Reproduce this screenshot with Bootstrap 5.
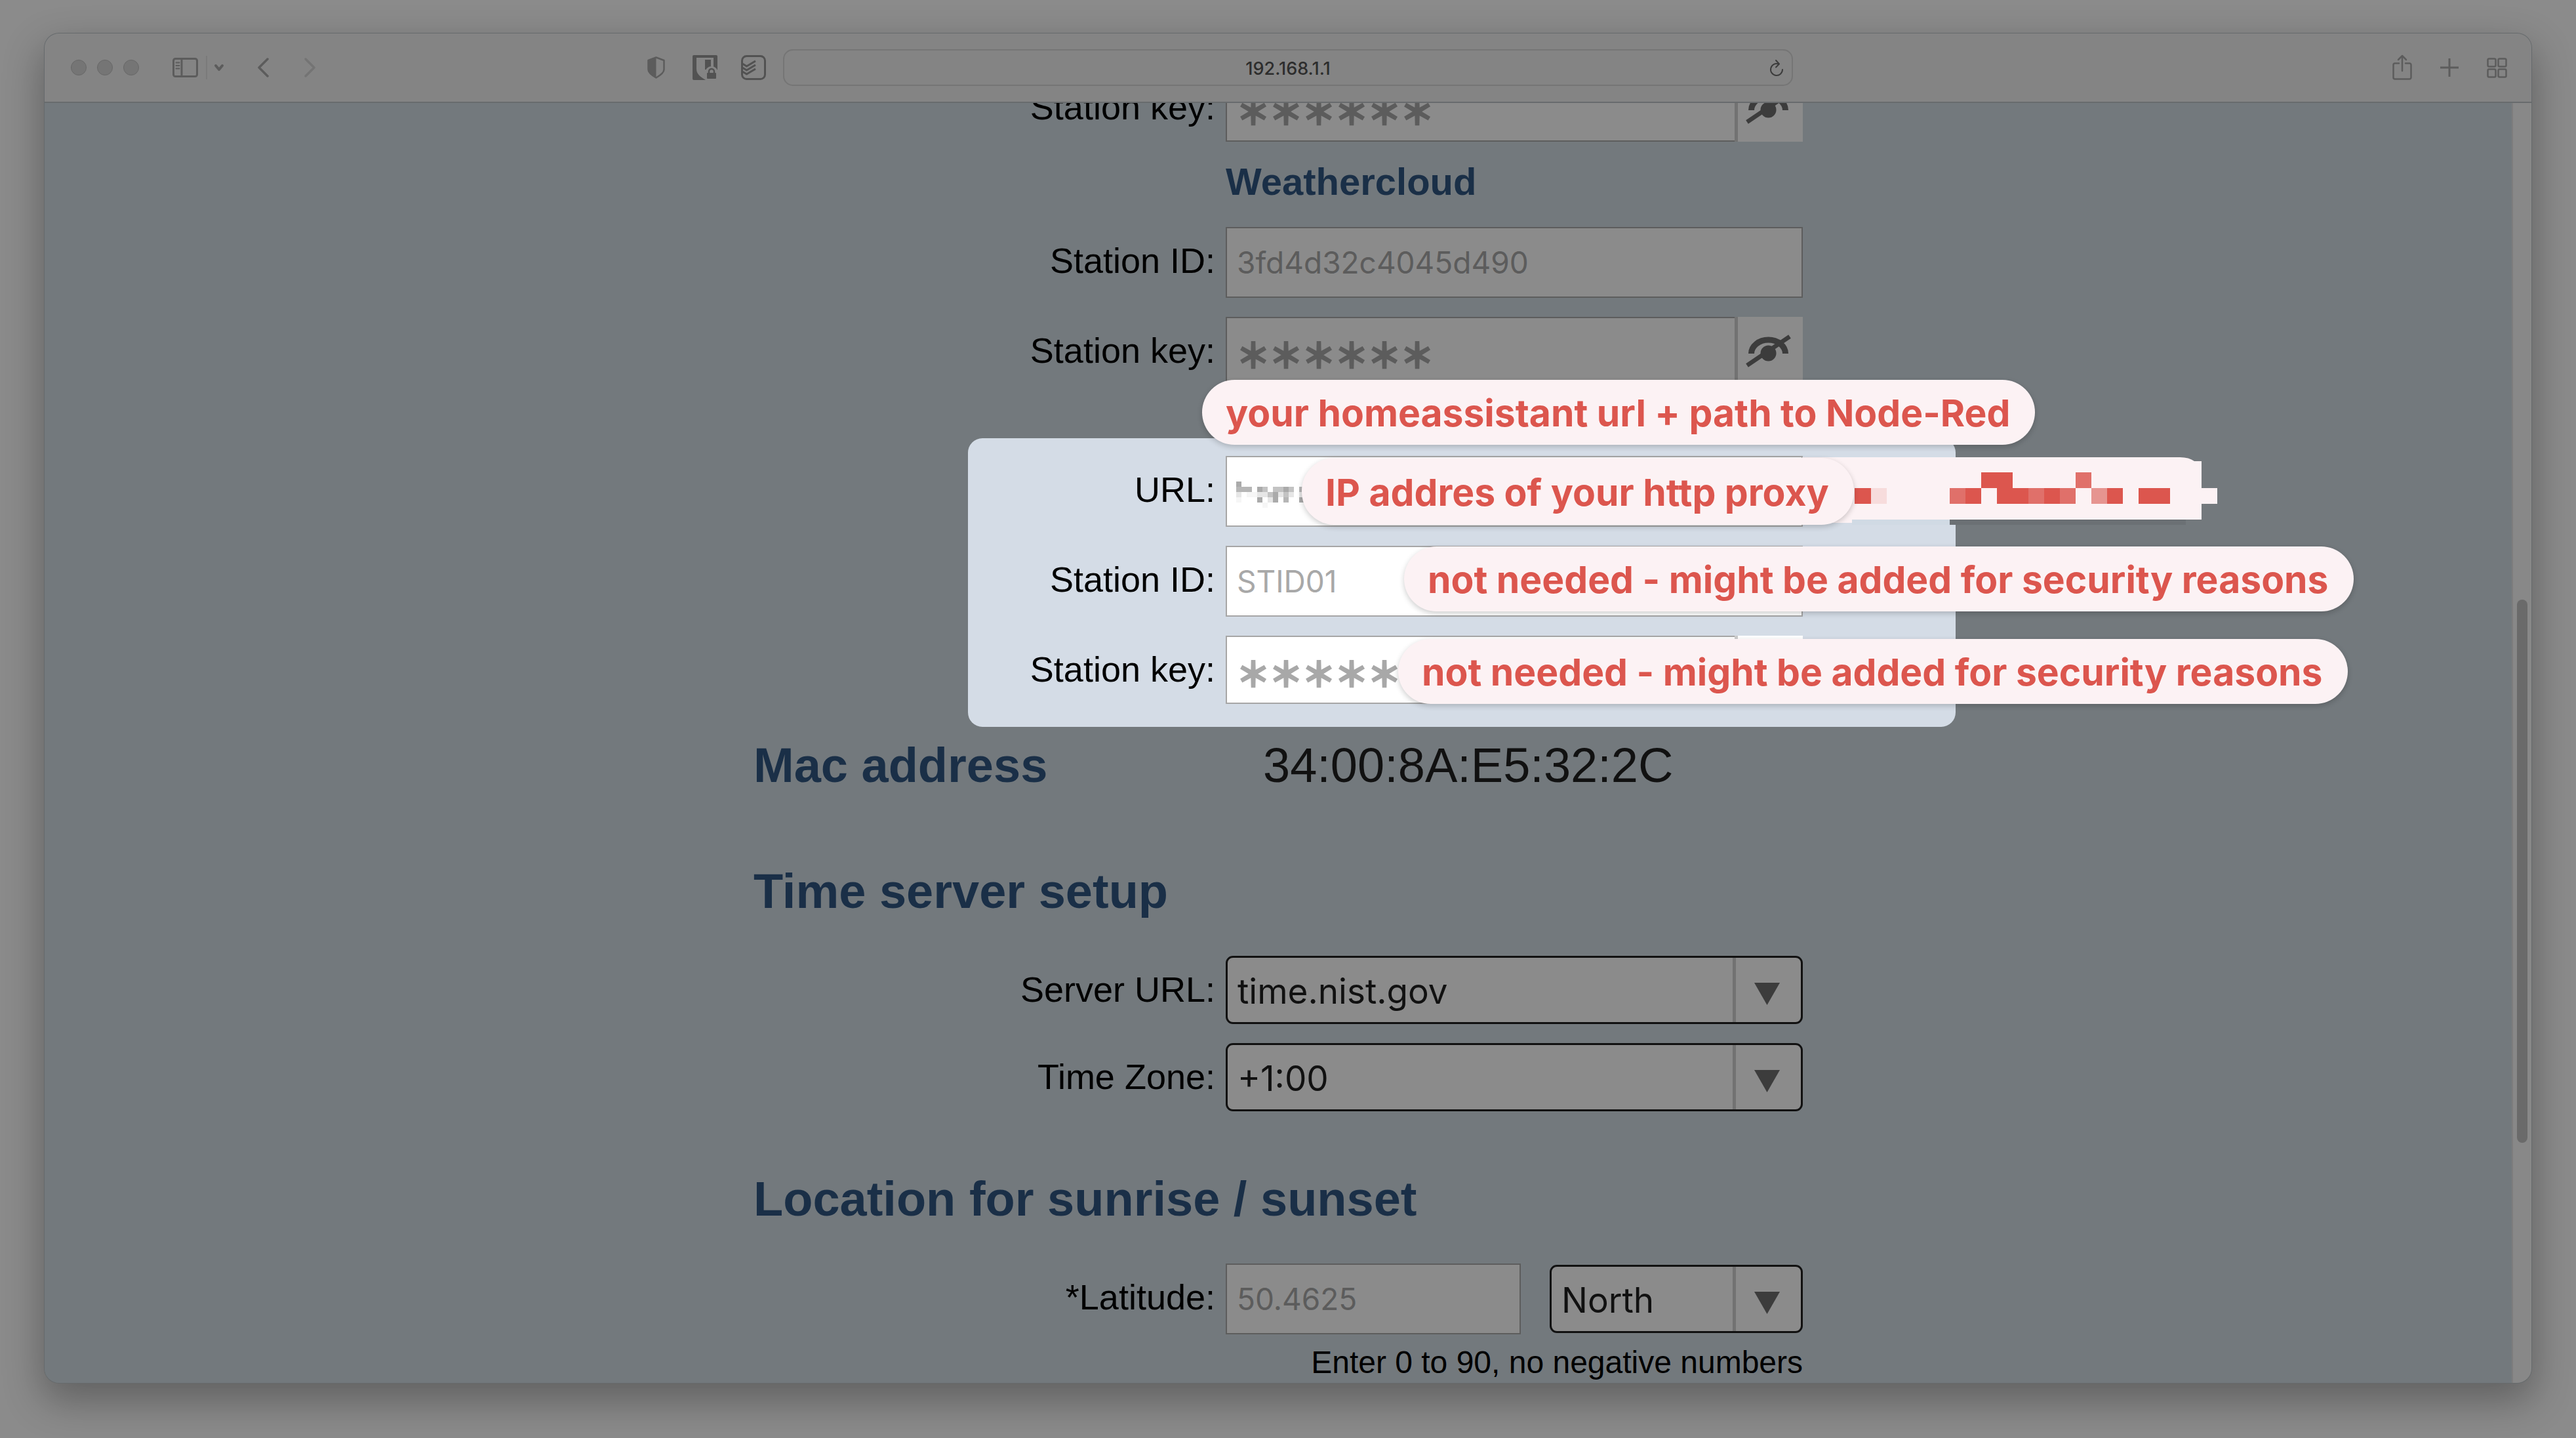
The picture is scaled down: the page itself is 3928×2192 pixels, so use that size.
<!DOCTYPE html>
<html lang="en">
<head>
<meta charset="utf-8">
<meta name="viewport" content="width=device-width, initial-scale=1">
<title>192.168.1.1</title>
<link href="https://cdn.jsdelivr.net/npm/bootstrap@5.3.0/dist/css/bootstrap.min.css" rel="stylesheet">
<style>
  body { background: #8b8b8b; padding: 51px 68px 84px; font-family: "Liberation Sans", Arial, sans-serif; color: #000; }
  .app-window { border-radius: 22px; background: #73797d; box-shadow: 0 0 0 1px #666a6c, 0 24px 60px 4px rgba(0,0,0,.3); }

  /* toolbar */
  .toolbar { height: 106px; background: #848484; border-bottom: 2px solid #686b6d; color: #5c5c5c; }
  .toolbar .btn { color: inherit; line-height: 1; }
  .toolbar svg { display: block; }
  .traffic { width: 24px; height: 24px; background: #757575; border: 1px solid #686868; }
  .side { flex: 1 1 0; }
  .group-start { padding-left: 40px; padding-right: 26px; }
  .group-end { padding-left: 29px; padding-right: 37px; gap: 43px; }
  .address { width: 1540px; height: 56px; border: 2px solid #757575; border-radius: 15px; }
  .address input { background: none; border: 0; width: 100%; height: 52px; text-align: center; color: #2d2d2d; font: 500 27px/48px Inter, sans-serif; padding: 3px 0 0; }
  .address .btn { right: 11px; top: 12px; color: #3c3c3c; }

  /* page */
  .page { min-height: 0; }
  .page-scroll { background: #73797d; }
  .setup { width: 1600px; max-width: 100%; margin-top: -45px; }
  .field-row { gap: 16px; margin-bottom: 29px; }
  .field-row label { flex: 1 1 0; text-align: right; font-size: 54px; line-height: 102px; white-space: nowrap; }
  .field { width: 880px; flex: none; }
  .entry { height: 108px; border: 2px solid #5d5d5d; border-radius: 0; background: #8b8b8b; padding: 0 15px; font: 46px/100px Inter, sans-serif; color: #5c5c5c; }
  .entry::placeholder, .entry:focus::placeholder { color: #5c5c5c; opacity: 1; }
  .entry:focus { background: #8b8b8b; box-shadow: none; }
  .entry-secret { height: 104px; font-family: "Noto Sans CJK SC", sans-serif; font-size: 50px; border-right: 0; padding-top: 6px; -webkit-text-stroke: 4px #5c5c5c; }
  .reveal { width: 104px; height: 104px; flex: none; border: 0; border-left: 5px solid #727272; border-radius: 0; background: #8b8b8b; padding: 0; color: #3c3c3c; }
  .reveal svg { display: block; }
  .pick { border: 3px solid #111; border-radius: 11px; height: 104px; background-color: #8b8b8b; color: #111; font: 53px/90px Inter, sans-serif; padding: 4px 110px 0 15px;
    background-image: url("data:image/svg+xml,%3Csvg xmlns='http://www.w3.org/2000/svg' viewBox='0 0 104 98'%3E%3Cpath d='M0 0h5v98H0z' fill='%23727272'/%3E%3Cpath d='M33 38h39L52.500 72z' fill='%233c3c3c'/%3E%3C/svg%3E");
    background-size: 104px 98px; background-position: right 0 top 0; }
  .entry-short { width: 450px; }
  .pick-short { width: 386px; }

  .provider { font-size: 58px; line-height: 122px; font-weight: 700; color: #1a2f47; margin: 0 0 8px 720px; }
  .section-title { font-size: 74px; line-height: 84px; font-weight: 700; color: #1a2f47; margin: 0 0 56px; }
  .time-title { margin-top: 108px; }
  .place-title { margin-top: 92px; }
  .mac-row { margin-top: 17px; }
  .mac-title { width: 777px; margin: 0; }
  .mac-value { font-size: 74px; line-height: 84px; color: #111; }
  .hint { font-size: 48px; line-height: 56px; margin: -14px 0 0; }

  /* highlighted group */
  .spot { margin: 81px -233px 0 327px; padding: 27px 233px 35px 0; background: #d4dce6; border-radius: 22px; }
  .spot .entry { background: #fff; border-color: #a6a6a6; color: #a8a8a8; }
  .spot .entry-secret { -webkit-text-stroke-color: #a8a8a8; }
  .spot .entry::placeholder { color: #a8a8a8; }
  .spot .reveal { background: #fff; border-color: #ccc; }
  .note { position: absolute; height: 99px; line-height: 101px; padding: 0 38px 0 36px; border-radius: 50px; background: #fcf2f4; color: #dc564e; font-family: Inter, sans-serif; font-size: 57px; font-weight: 700; white-space: nowrap; box-shadow: 0 3px 8px rgba(0,0,0,.2); }
  .note-path { left: 357px; top: -89px; }
  .note-proxy { left: 509px; top: 30px; height: 102px; line-height: 106px; }
  .note-id { left: 665px; top: 165px; }
  .note-key { left: 656px; top: 306px; }
  .masked-note { position: absolute; left: 1272px; top: 29px; }
  .masked-url { position: absolute; left: 409px; top: 66px; }

  .track { width: 30px; border-left: 2px solid #7d7d7d; background: #888; padding: 757px 6px 366px; }
  .thumb { background: #6a6a6a; border-radius: 8px; }
</style>
</head>
<body class="vh-100 d-flex flex-column overflow-hidden">
<div class="app-window flex-grow-1 d-flex flex-column overflow-hidden">

  <header class="toolbar d-flex align-items-center flex-shrink-0">
    <div class="side group-start d-flex align-items-center justify-content-between">
      <div class="d-flex align-items-center">
        <div class="d-flex gap-3">
          <span class="traffic rounded-circle"></span><span class="traffic rounded-circle"></span><span class="traffic rounded-circle"></span>
        </div>
        <button class="btn border-0 p-0 d-flex" type="button" aria-label="Sidebar">
          <svg width="198" height="38" viewBox="0 0 198 38" fill="none" stroke="currentColor">
            <rect x="52.500" y="5.500" width="36" height="27" rx="3" stroke-width="3"/>
            <path d="M65 6v26" stroke-width="3"/><path d="M56.500 11.500h5M56.500 16h5M56.500 20.500h5" stroke-width="2" stroke-linecap="round"/>
            <path d="M103 1v36" stroke="#7b7b7b" stroke-width="2"/>
            <path d="M117 16l5 6 5-6" stroke-width="4" stroke-linecap="round" stroke-linejoin="round"/>
            <path d="M196 6l-13 13 13 13" stroke-width="3.500" stroke-linecap="round" stroke-linejoin="round"/>
          </svg>
        </button>
        <button class="btn border-0 p-0" type="button" aria-label="Forward">
          <svg width="74" height="38" viewBox="0 0 74 38" fill="none" stroke="#747474" stroke-width="3.500" stroke-linecap="round" stroke-linejoin="round"><path d="M56 6l13 13-13 13"/></svg>
        </button>
      </div>
      <div class="d-flex align-items-center">
        <button class="btn border-0 p-0" type="button" aria-label="Privacy report">
          <svg width="69" height="38" viewBox="0 0 69 38"><path d="M13.500 3.500L25.500 8v14c0 5-6 9-12 12.500C7.500 31 1.500 27 1.500 22V8z" fill="none" stroke="currentColor" stroke-width="2.500" stroke-linejoin="round"/><path d="M13.500 3L1 8v14c0 5 6 9 12.500 13z" fill="currentColor"/></svg>
        </button>
        <button class="btn border-0 p-0" type="button" aria-label="Vault">
          <svg width="74" height="38" viewBox="0 0 74 38"><rect width="38" height="38" rx="2" fill="#525252"/><path d="M6 4h26v17c0 8-6 13-12 17C14 34 6 30 6 21z" fill="#848484"/><path d="M19 7h9v15h-9z" fill="#525252"/><circle cx="29" cy="27" r="10" fill="#848484"/><path d="M20 38h18v-9H20z" fill="#848484"/><rect x="22" y="27" width="14" height="9" rx="1" fill="#525252"/><path d="M25 28v-3a4 4 0 0 1 8 0v3" fill="none" stroke="#525252" stroke-width="2.500"/></svg>
        </button>
        <button class="btn border-0 p-0" type="button" aria-label="Tasks">
          <svg width="38" height="38" viewBox="0 0 38 38" fill="none" stroke="#525252" stroke-width="3" stroke-linejoin="round"><rect x="1.500" y="1.500" width="35" height="35" rx="7"/><path d="M2 13l6.500 4L22 9M2 19l6.500 4L22 15M2 25l6.500 4L22 21"/></svg>
        </button>
      </div>
    </div>
    <div class="address position-relative flex-shrink-0">
      <input class="d-block" type="text" value="192.168.1.1" aria-label="Address">
      <button class="btn border-0 p-0 position-absolute" type="button" aria-label="Reload">
        <svg width="24" height="30" viewBox="0 0 24 30" fill="none" stroke="currentColor" stroke-width="2" stroke-linecap="round" stroke-linejoin="round"><path d="M15 8.500A9 9 0 1 0 21 17M11 3l5 5.500-5 5"/></svg>
      </button>
    </div>
    <div class="side group-end d-flex align-items-center justify-content-end">
      <button class="btn border-0 p-0" type="button" aria-label="Share">
        <svg width="30" height="40" viewBox="0 0 30 40" fill="none" stroke="currentColor" stroke-width="2.500" stroke-linecap="round" stroke-linejoin="round"><path d="M10 13.500H4a2.500 2.500 0 0 0-2.500 2.500v19a2.500 2.500 0 0 0 2.500 2.500h22a2.500 2.500 0 0 0 2.500-2.500V16a2.500 2.500 0 0 0-2.500-2.500h-6M15 25V3M9 8l6-6 6 6"/></svg>
      </button>
      <button class="btn border-0 p-0" type="button" aria-label="New tab">
        <svg width="28" height="28" viewBox="0 0 28 28" stroke="currentColor" stroke-width="3"><path d="M14 0v28M0 14h28"/></svg>
      </button>
      <button class="btn border-0 p-0" type="button" aria-label="Tab overview">
        <svg width="31" height="31" viewBox="0 0 31 31" fill="none" stroke="currentColor" stroke-width="2.500"><rect x="1.500" y="1.500" width="12" height="12" rx="2"/><rect x="17.500" y="1.500" width="12" height="12" rx="2"/><rect x="1.500" y="17.500" width="12" height="12" rx="2"/><rect x="17.500" y="17.500" width="12" height="12" rx="2"/></svg>
      </button>
    </div>
  </header>

  <div class="page flex-grow-1 d-flex">
    <main class="page-scroll flex-grow-1 overflow-hidden">
      <form class="setup mx-auto">
        <div class="field-row d-flex mb-0">
          <label for="key1">Station key:</label>
          <div class="field d-flex">
            <input class="form-control entry entry-secret" id="key1" type="text" placeholder="＊＊＊＊＊＊">
            <button class="reveal" type="button" aria-label="Show key"><svg width="99" height="104" viewBox="0 0 99 104" fill="none" stroke="currentColor"><path d="M20.500 56a26 21 0 0 1 52 0" stroke-width="9"/><path d="M14 74l65-44" stroke-width="6.500"/><circle cx="46.500" cy="55.500" r="12" fill="currentColor" stroke="none"/></svg></button>
          </div>
        </div>

        <h3 class="provider">Weathercloud</h3>
        <div class="field-row d-flex">
          <label for="id2">Station ID:</label>
          <div class="field"><input class="form-control entry" id="id2" type="text" placeholder="3fd4d32c4045d490"></div>
        </div>
        <div class="field-row d-flex mb-0">
          <label for="key2">Station key:</label>
          <div class="field d-flex">
            <input class="form-control entry entry-secret" id="key2" type="text" placeholder="＊＊＊＊＊＊">
            <button class="reveal" type="button" aria-label="Show key"><svg width="99" height="104" viewBox="0 0 99 104" fill="none" stroke="currentColor"><path d="M20.500 56a26 21 0 0 1 52 0" stroke-width="9"/><path d="M14 74l65-44" stroke-width="6.500"/><circle cx="46.500" cy="55.500" r="12" fill="currentColor" stroke="none"/></svg></button>
          </div>
        </div>

        <section class="spot position-relative">
          <div class="field-row d-flex">
            <label for="url3">URL:</label>
            <div class="field"><input class="form-control entry" id="url3" type="text"></div>
          </div>
          <div class="field-row d-flex">
            <label for="id3">Station ID:</label>
            <div class="field"><input class="form-control entry" id="id3" type="text" placeholder="STID01"></div>
          </div>
          <div class="field-row d-flex mb-0">
            <label for="key3">Station key:</label>
            <div class="field d-flex">
              <input class="form-control entry entry-secret" id="key3" type="text" placeholder="＊＊＊＊＊＊">
              <button class="reveal" type="button" aria-label="Show key"></button>
            </div>
          </div>
          <svg class="masked-url" width="112" height="40" viewBox="0 0 14 5" shape-rendering="crispEdges">
            <path fill="#aaa" d="M0 0h1v1H0zM4 1h1v1H4zM9 1h1v1H9zM7 2h1v1H7zM4 3h1v1H4zM7 3h1v1H7zM12 3h1v1h-1z"/>
            <path fill="#b6b6b6" d="M0 1h3v1H0zM9 3h1v1H9zM12 1h1v1h-1z"/>
            <path fill="#c3c3c3" d="M5 1h1v1H5zM7 1h2v1H7zM10 1h1v1h-1zM6 2h1v1H6zM9 2h1v1H9z"/>
            <path fill="#e6e6e6" d="M0 2h1v1H0zM4 2h2v1H4zM8 2h1v1H8zM10 2h1v1h-1zM6 3h1v1H6zM12 2h1v1h-1z"/>
            <path fill="#f6f6f6" d="M2 2h2v1H2zM0 3h1v1H0zM5 4h1v1H5z"/>
          </svg>
          <svg class="masked-note" width="634" height="104" viewBox="0 0 634 104">
            <path fill="#d0dae4" d="M76 95h149v8H76z"/><path fill="#6b7074" d="M225 95h360v8H225z"/>
            <path fill="#fcf2f4" d="M0 0h576q14 0 22 6h11v41h24v24h-24v24H76v5H0z"/>
            <g fill="#dc564e" shape-rendering="crispEdges"><path d="M80 47h25v24H80zM249 47h24v24h-24zM273 23h48v24h-48zM297 47h48v24h-48zM369 47h24v24h-24zM465 47h24v24h-24zM513 47h48v24h-48z"/>
            <path fill="#e0706a" d="M225 47h24v24h-24zM345 47h24v24h-24zM393 47h24v24h-24zM417 23h24v24h-24z"/><path fill="#e69490" d="M441 47h24v24h-24z"/><path fill="#f7dcdc" d="M105 47h24v24h-24z"/></g>
          </svg>
          <div class="note note-path">your homeassistant url + path to Node-Red</div>
          <div class="note note-proxy">IP addres of your http proxy</div>
          <div class="note note-id">not needed - might be added for security reasons</div>
          <div class="note note-key">not needed - might be added for security reasons</div>
        </section>

        <div class="mac-row d-flex">
          <h2 class="section-title mac-title">Mac address</h2>
          <div class="mac-value">34:00:8A:E5:32:2C</div>
        </div>

        <h2 class="section-title time-title">Time server setup</h2>
        <div class="field-row d-flex">
          <label for="server">Server URL:</label>
          <div class="field"><select class="form-select pick" id="server"><option>time.nist.gov</option></select></div>
        </div>
        <div class="field-row d-flex mb-0">
          <label for="zone">Time Zone:</label>
          <div class="field"><select class="form-select pick" id="zone"><option>+1:00</option></select></div>
        </div>

        <h2 class="section-title place-title">Location for sunrise / sunset</h2>
        <div class="field-row d-flex">
          <label for="lat">*Latitude:</label>
          <div class="field d-flex align-items-center justify-content-between">
            <input class="form-control entry entry-short" id="lat" type="text" placeholder="50.4625">
            <select class="form-select pick pick-short" aria-label="Hemisphere"><option>North</option></select>
          </div>
        </div>
        <p class="hint text-end">Enter 0 to 90, no negative numbers</p>
      </form>
    </main>
    <div class="track d-flex flex-column flex-shrink-0"><div class="thumb flex-grow-1"></div></div>
  </div>
</div>
<script src="https://cdn.jsdelivr.net/npm/bootstrap@5.3.0/dist/js/bootstrap.bundle.min.js"></script>
</body>
</html>
